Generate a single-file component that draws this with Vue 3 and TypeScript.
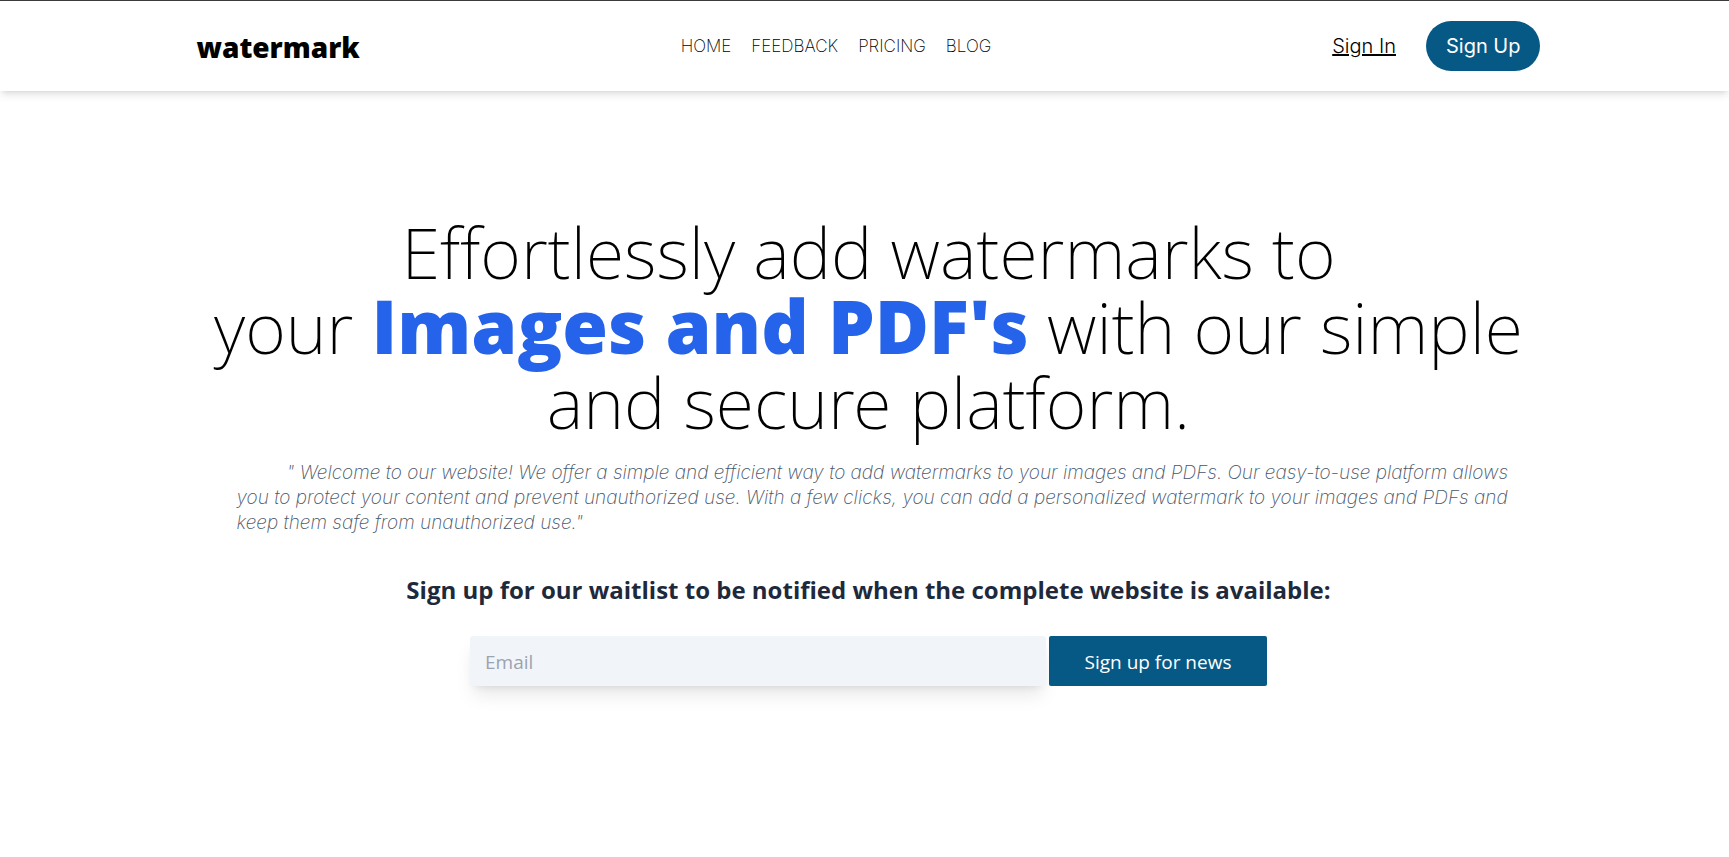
<script setup lang="ts">
interface NavLink {
  label: string
  href: string
}

const links: NavLink[] = [
  { label: 'HOME', href: '#home' },
  { label: 'FEEDBACK', href: '#feedback' },
  { label: 'PRICING', href: '#pricing' },
  { label: 'BLOG', href: '#blog' },
]
</script>

<template>
  <div class="page">
    <header class="header">
      <div class="bar">
        <a class="brand" href="#home">watermark</a>
        <nav class="nav">
          <a v-for="link in links" :key="link.label" :href="link.href">{{ link.label }}</a>
        </nav>
        <div class="account">
          <a class="signin" href="#signin">Sign In</a>
          <button class="signup" type="button">Sign Up</button>
        </div>
      </div>
    </header>

    <main class="hero">
      <h1 class="title">
        Effortlessly add watermarks to<br />
        your <strong>Images and PDF's</strong> with our simple<br />
        and secure platform.
      </h1>
      <p class="intro">
        " Welcome to our website! We offer a simple and efficient way to add watermarks to your images and PDFs. Our easy-to-use platform allows<br />
        you to protect your content and prevent unauthorized use. With a few clicks, you can add a personalized watermark to your images and PDFs and<br />
        keep them safe from unauthorized use."
      </p>
      <h2 class="subtitle">Sign up for our waitlist to be notified when the complete website is available:</h2>
      <form class="form" @submit.prevent>
        <input type="email" placeholder="Email" aria-label="Email" />
        <button type="submit">Sign up for news</button>
      </form>
    </main>
  </div>
</template>

<style>
body {
  background: #ffffff;
}
</style>

<style scoped>
.page {
  min-height: 100vh;
  box-sizing: border-box;
  border-top: 1px solid #3c3c3c;
  font-family: 'Open Sans', 'Noto Sans', sans-serif;
  color: #000000;
}

.header {
  padding-left: 8px;
  box-shadow: 0 5px 8px -1px rgba(0, 0, 0, 0.1), 0 3px 5px -3px rgba(0, 0, 0, 0.1);
}

.bar {
  display: flex;
  justify-content: space-between;
  align-items: center;
  max-width: 1344px;
  height: 90px;
  margin: 0 auto;
}

.brand {
  padding-top: 2px;
  font: 800 28px/36px 'Open Sans', sans-serif;
  color: #000000;
  text-decoration: none;
}

.nav {
  display: flex;
  gap: 20px;
}

.nav a {
  font: 200 17px/24px 'Inter', sans-serif;
  color: #000000;
  text-decoration: none;
}

.account {
  display: flex;
  align-items: center;
  gap: 30px;
  padding-left: 20px;
}

.signin {
  font: 300 20px/28px 'Inter', sans-serif;
  color: #000000;
}

.signup {
  height: 50px;
  padding: 0 20px;
  border: 0;
  border-radius: 25px;
  background: #075985;
  color: #ffffff;
  font: 400 20px/28px 'Inter', sans-serif;
}

.hero {
  padding: 124px 0 0 8px;
  text-align: center;
}

.title {
  margin: 0;
  font: 200 70px/75px 'Noto Sans', sans-serif;
  white-space: nowrap;
}

.title strong {
  font: 800 74px/70px 'Open Sans', sans-serif;
  color: #2563eb;
}

.intro {
  max-width: 1264px;
  margin: 20px auto 0;
  font: italic 200 19px/25px 'Inter', sans-serif;
  font-feature-settings: 'cv11';
  color: #475569;
  text-align: left;
  text-indent: 50px;
  white-space: nowrap;
}

.subtitle {
  margin: 39px 0 0;
  font: 660 24px/32px 'Open Sans', sans-serif;
  color: #1e293b;
}

.form {
  display: flex;
  justify-content: center;
  gap: 3px;
  margin-top: 30px;
}

.form input {
  box-sizing: border-box;
  width: 576px;
  height: 50px;
  padding: 2px 15px 0;
  border: 0;
  border-radius: 3px;
  background: #f1f5f9;
  box-shadow: 0 12px 19px -4px rgba(0, 0, 0, 0.1), 0 5px 8px -5px rgba(0, 0, 0, 0.1);
  font: 400 19px/28px 'Open Sans', sans-serif;
}

.form input::placeholder {
  color: #9ca3af;
}

.form button {
  width: 218px;
  height: 50px;
  padding: 2px 0 0;
  border: 0;
  border-radius: 2px;
  background: #075985;
  color: #ffffff;
  font: 400 19px/28px 'Open Sans', sans-serif;
}
</style>
